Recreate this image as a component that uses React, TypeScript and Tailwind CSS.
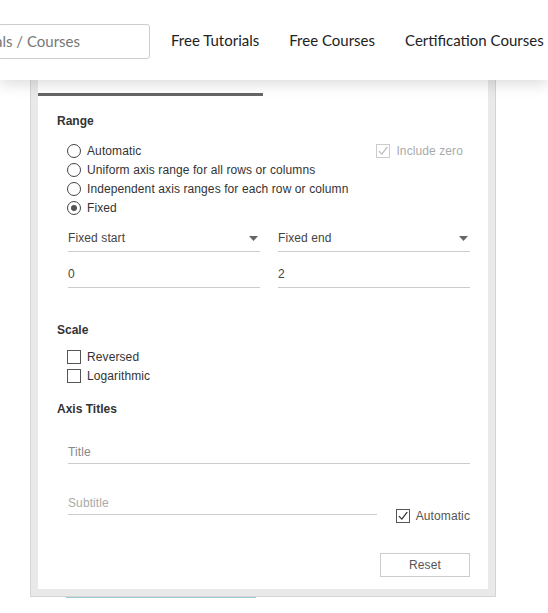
import React from "react";

const panelFont = { fontFamily: '"Liberation Sans", Arial, sans-serif' };

function Radio({ label, checked }: { label: string; checked?: boolean }) {
  return (
    <div className="flex h-[19px] items-center">
      <span className="ml-[10px] flex h-[14px] w-[14px] items-center justify-center rounded-full border border-[#444] bg-white">
        {checked && <span className="h-[6px] w-[6px] rounded-full bg-[#555]" />}
      </span>
      <span className="ml-[6px] text-[12px] leading-[14px] tracking-[0.1px] text-[#333]">{label}</span>
    </div>
  );
}

function Check({ checked, muted }: { checked?: boolean; muted?: boolean }) {
  return (
    <span
      className={
        muted
          ? "flex h-[14px] w-[14px] items-center justify-center border border-[#ccc] bg-white"
          : "flex h-[14px] w-[14px] items-center justify-center border border-[#555] bg-white"
      }
    >
      {checked && (
        <svg width="12" height="12" viewBox="0 0 12 12" fill="none">
          <path
            d="M2.2 6.4 L4.8 9.2 L10 2.4"
            stroke={muted ? "#bbb" : "#333"}
            strokeWidth="1.2"
            strokeLinecap="round"
            strokeLinejoin="round"
          />
        </svg>
      )}
    </span>
  );
}

function CheckRow({ label }: { label: string }) {
  return (
    <div className="flex h-[19px] items-center">
      <span className="ml-[10px]">
        <Check />
      </span>
      <span className="ml-[6px] text-[12px] leading-[14px] tracking-[0.1px] text-[#333]">{label}</span>
    </div>
  );
}

function Select({ label }: { label: string }) {
  return (
    <div className="flex h-[28px] items-center justify-between border-b border-[#ccc] pr-[2px] pt-[1px]">
      <span className="text-[12px] leading-[14px] tracking-[0.1px] text-[#444]">{label}</span>
      <svg width="9" height="5" viewBox="0 0 9 5">
        <path d="M0 0 H9 L4.5 5 Z" fill="#666" />
      </svg>
    </div>
  );
}

function Field({ value }: { value: string }) {
  return (
    <div className="flex h-[28px] items-center border-b border-[#ccc] pt-[1px]">
      <span className="text-[12px] leading-[14px] text-[#444]">{value}</span>
    </div>
  );
}

export default function App() {
  return (
    <div className="relative h-[613px] w-[548px] overflow-hidden bg-white">
      {/* site header */}
      <header
        className="relative z-10 flex h-[80px] items-center bg-white shadow-[0_4px_14px_rgba(0,0,0,0.14)]"
        style={{ fontFamily: 'Lato, "Open Sans", sans-serif' }}
      >
        <div className="-ml-[2px] mt-[2px] flex h-[35px] w-[152px] shrink-0 items-center justify-end overflow-hidden whitespace-nowrap rounded-[3px] border border-[#ccc] pr-[69px] text-[15px] text-[#777]">
          <span>Search Tutorials / Courses</span>
        </div>
        <nav className="ml-[21px] flex gap-[30px] whitespace-nowrap text-[15px] text-[#222]">
          <span>Free Tutorials</span>
          <span>Free Courses</span>
          <span>Certification Courses</span>
        </nav>
      </header>

      {/* axis options dialog */}
      <div
        className="relative -mt-[20px] ml-[30px] w-[466px] border border-[#d4d4d4] bg-[#e9e9e9] px-[7px] pb-[7px]"
        style={panelFont}
      >
        <div className="flex flex-col bg-white">
          <div className="flex h-[35px] items-end">
            <div className="h-[3px] w-[225px] bg-[#666]" />
          </div>

          <div className="flex flex-col pl-[19px] pr-[18px] pb-[12px]">
            <div className="mt-[18px] h-[14px] text-[12px] font-bold leading-[14px] text-[#333]">Range</div>

            <div className="mt-[13px] flex items-start justify-between">
              <div className="flex flex-col">
                <Radio label="Automatic" />
                <Radio label="Uniform axis range for all rows or columns" />
                <Radio label="Independent axis ranges for each row or column" />
                <Radio label="Fixed" checked />
              </div>
              <div className="mr-[7px] flex h-[19px] items-center">
                <Check checked muted />
                <span className="ml-[6px] text-[12px] leading-[14px] tracking-[0.1px] text-[#aaa]">Include zero</span>
              </div>
            </div>

            <div className="ml-[11px] mt-[7px] grid grid-cols-2 gap-x-[18px]">
              <Select label="Fixed start" />
              <Select label="Fixed end" />
            </div>
            <div className="ml-[11px] mt-[8px] grid grid-cols-2 gap-x-[18px]">
              <Field value="0" />
              <Field value="2" />
            </div>

            <div className="mt-[35px] h-[14px] text-[12px] font-bold leading-[14px] text-[#333]">Scale</div>
            <div className="mt-[10px] flex flex-col">
              <CheckRow label="Reversed" />
              <CheckRow label="Logarithmic" />
            </div>

            <div className="mt-[17px] h-[14px] text-[12px] font-bold leading-[14px] text-[#333]">Axis Titles</div>

            <div className="ml-[11px] mt-[21px]">
              <div className="flex h-[27px] items-center border-b border-[#ccc] pt-[3px]">
                <span className="text-[12px] leading-[14px] tracking-[0.1px] text-[#888]">Title</span>
              </div>
            </div>

            <div className="ml-[11px] mt-[24px] flex items-start justify-between">
              <div className="flex h-[27px] w-[309px] items-center border-b border-[#ccc] pt-[3px]">
                <span className="text-[12px] leading-[14px] tracking-[0.1px] text-[#aaa]">Subtitle</span>
              </div>
              <div className="mt-[21px] flex items-center">
                <Check checked />
                <span className="ml-[6px] text-[12px] leading-[14px] tracking-[0.1px] text-[#555]">Automatic</span>
              </div>
            </div>

            <div className="mt-[30px] flex justify-end">
              <button className="h-[24px] w-[90px] border border-[#ccc] bg-white text-[12px] tracking-[0.1px] text-[#555]">
                Reset
              </button>
            </div>
          </div>
        </div>
      </div>
      <div className="ml-[66px] h-[1px] w-[190px] bg-[#9cc9cf]" />
    </div>
  );
}
